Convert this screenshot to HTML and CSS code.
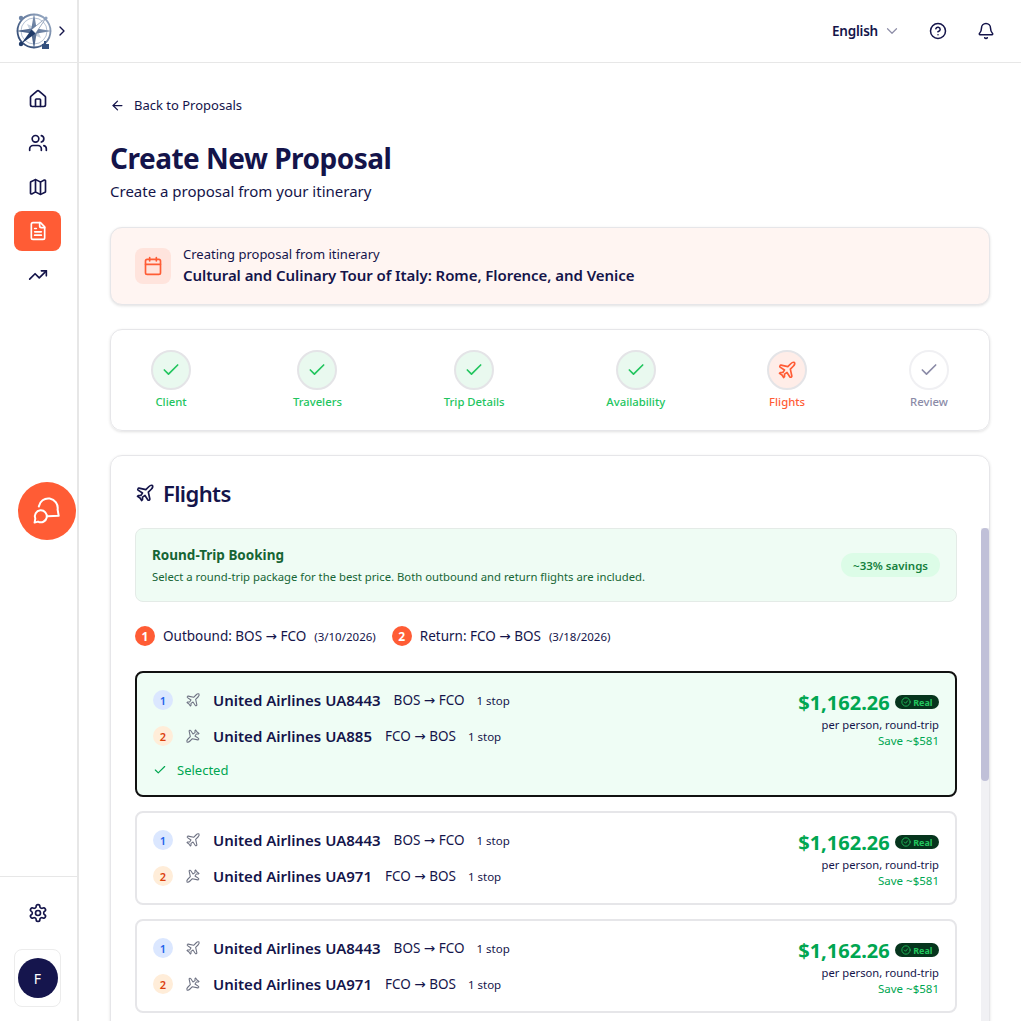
FILE: index.html
```html
<!DOCTYPE html>
<html lang="en">
<head>
    <meta charset="utf-8">
    <meta name="viewport" content="width=device-width, initial-scale=1">
    <title>Create New Proposal</title>
    <link rel="stylesheet" href="styles.css">
</head>
<body>
    <svg class="sprite" aria-hidden="true">
        <symbol id="i-home" viewBox="0 0 24 24"><path d="M15 21v-8a1 1 0 0 0-1-1h-4a1 1 0 0 0-1 1v8"/><path d="M3 10a2 2 0 0 1 .709-1.528l7-5.999a2 2 0 0 1 2.582 0l7 5.999A2 2 0 0 1 21 10v9a2 2 0 0 1-2 2H5a2 2 0 0 1-2-2z"/></symbol>
        <symbol id="i-users" viewBox="0 0 24 24"><path d="M16 21v-2a4 4 0 0 0-4-4H6a4 4 0 0 0-4 4v2"/><circle cx="9" cy="7" r="4"/><path d="M22 21v-2a4 4 0 0 0-3-3.87"/><path d="M16 3.13a4 4 0 0 1 0 7.75"/></symbol>
        <symbol id="i-map" viewBox="0 0 24 24"><path d="M14.106 5.553a2 2 0 0 0 1.788 0l3.659-1.83A1 1 0 0 1 21 4.619v12.764a1 1 0 0 1-.553.894l-4.553 2.277a2 2 0 0 1-1.788 0l-4.212-2.106a2 2 0 0 0-1.788 0l-3.659 1.83A1 1 0 0 1 3 19.381V6.618a1 1 0 0 1 .553-.894l4.553-2.277a2 2 0 0 1 1.788 0z"/><path d="M15 5.764v15"/><path d="M9 3.236v15"/></symbol>
        <symbol id="i-file" viewBox="0 0 24 24"><path d="M15 2H6a2 2 0 0 0-2 2v16a2 2 0 0 0 2 2h12a2 2 0 0 0 2-2V7Z"/><path d="M14 2v4a2 2 0 0 0 2 2h4"/><path d="M10 9H8"/><path d="M16 13H8"/><path d="M16 17H8"/></symbol>
        <symbol id="i-trend" viewBox="0 0 24 24"><polyline points="22 7 13.5 15.5 8.5 10.5 2 17"/><polyline points="16 7 22 7 22 13"/></symbol>
        <symbol id="i-gear" viewBox="0 0 24 24"><path d="M12.22 2h-.44a2 2 0 0 0-2 2v.18a2 2 0 0 1-1 1.73l-.43.25a2 2 0 0 1-2 0l-.15-.08a2 2 0 0 0-2.73.73l-.22.38a2 2 0 0 0 .73 2.73l.15.1a2 2 0 0 1 1 1.72v.51a2 2 0 0 1-1 1.74l-.15.09a2 2 0 0 0-.73 2.73l.22.38a2 2 0 0 0 2.73.73l.15-.08a2 2 0 0 1 2 0l.43.25a2 2 0 0 1 1 1.73V20a2 2 0 0 0 2 2h.44a2 2 0 0 0 2-2v-.18a2 2 0 0 1 1-1.73l.43-.25a2 2 0 0 1 2 0l.15.08a2 2 0 0 0 2.73-.73l.22-.39a2 2 0 0 0-.73-2.73l-.15-.08a2 2 0 0 1-1-1.74v-.5a2 2 0 0 1 1-1.74l.15-.09a2 2 0 0 0 .73-2.73l-.22-.38a2 2 0 0 0-2.73-.73l-.15.08a2 2 0 0 1-2 0l-.43-.25a2 2 0 0 1-1-1.73V4a2 2 0 0 0-2-2z"/><circle cx="12" cy="12" r="3"/></symbol>
        <symbol id="i-bell" viewBox="0 0 24 24"><path d="M10.268 21a2 2 0 0 0 3.464 0"/><path d="M3.262 15.326A1 1 0 0 0 4 17h16a1 1 0 0 0 .74-1.673C19.41 13.956 18 12.499 18 8A6 6 0 0 0 6 8c0 4.499-1.411 5.956-2.738 7.326"/></symbol>
        <symbol id="i-help" viewBox="0 0 24 24"><circle cx="12" cy="12" r="10"/><path d="M9.09 9a3 3 0 0 1 5.83 1c0 2-3 3-3 3"/><path d="M12 17h.01"/></symbol>
        <symbol id="i-calendar" viewBox="0 0 24 24"><path d="M8 2v4"/><path d="M16 2v4"/><rect x="3" y="4" width="18" height="18" rx="2"/><path d="M3 10h18"/></symbol>
        <symbol id="i-plane" viewBox="0 0 24 24"><path d="M17.8 19.2 16 11l3.5-3.5C21 6 21.5 4 21 3c-1-.5-3 0-4.5 1.5L13 8 4.8 6.2c-.5-.1-.9.1-1.1.5l-.3.5c-.2.5-.1 1 .3 1.3L9 12l-2 3H4l-1 1 3 2 2 3 1-1v-3l3-2 3.5 5.3c.3.4.8.5 1.3.3l.5-.2c.4-.3.6-.7.5-1.2z"/></symbol>
        <symbol id="i-check" viewBox="0 0 24 24"><path d="M20 6 9 17l-5-5"/></symbol>
        <symbol id="i-down" viewBox="0 0 24 24"><path d="m6 9 6 6 6-6"/></symbol>
        <symbol id="i-right" viewBox="0 0 24 24"><path d="m9 18 6-6-6-6"/></symbol>
        <symbol id="i-back" viewBox="0 0 24 24"><path d="m12 19-7-7 7-7"/><path d="M19 12H5"/></symbol>
        <symbol id="i-chat" viewBox="0 0 28 28"><path d="M5.8 9.5A9.5 9.5 0 0 1 24.6 12.5L25.7 18.8 14.6 19.3"/><path d="M1.6 25.6 2.3 21.6A6 6 0 1 1 5 24.6Z"/></symbol>
        <symbol id="i-circle-check" viewBox="0 0 24 24"><circle cx="12" cy="12" r="10"/><path d="m8 12 3 3 5-6"/></symbol>
    </svg>

    <aside class="sidebar">
        <div class="brand">
            <svg class="logo" viewBox="0 0 38 38">
                <defs>
                    <linearGradient id="logo-grad" x1="0" y1="1" x2="1" y2="0">
                        <stop offset="0" stop-color="#1f3a68"/>
                        <stop offset="1" stop-color="#a3b4cb"/>
                    </linearGradient>
                </defs>
                <circle cx="19" cy="19" r="16.5" fill="none" stroke="url(#logo-grad)" stroke-width="1.8"/>
                <circle cx="19" cy="19" r="13" fill="none" stroke="#b5c2d4" stroke-width="1"/>
                <path d="M12 12l7 3 7-3-3 7 3 7-7-3-7 3 3-7z" fill="#c9d3e0"/>
                <path d="M19 1l2.6 15.4L37 19l-15.4 2.6L19 37l-2.6-15.4L1 19l15.4-2.6z" fill="url(#logo-grad)"/>
                <path d="M6 32l10.6-14.6 4 4z" fill="#1f3a68"/>
                <path d="M31 6 16.6 17.4l4 4z" fill="#fff" stroke="#5b7296" stroke-width=".6"/>
                <circle cx="6" cy="32" r="2.2" fill="#1f3a68"/>
                <path d="M27 37v-5h2v-3h2v3h3v5z" fill="#33507e"/>
                <circle cx="6" cy="6" r="2.2" fill="#6d84a6"/>
                <circle cx="31" cy="6" r="1.6" fill="#8fa3c0"/>
            </svg>
            <svg class="icon brand-arrow"><use href="#i-right"/></svg>
        </div>
        <nav class="nav">
            <a class="nav-item"><svg class="icon"><use href="#i-home"/></svg></a>
            <a class="nav-item"><svg class="icon"><use href="#i-users"/></svg></a>
            <a class="nav-item"><svg class="icon"><use href="#i-map"/></svg></a>
            <a class="nav-item active"><svg class="icon"><use href="#i-file"/></svg></a>
            <a class="nav-item"><svg class="icon"><use href="#i-trend"/></svg></a>
        </nav>
        <div class="side-foot">
            <a class="nav-item"><svg class="icon"><use href="#i-gear"/></svg></a>
            <div class="avatar-box"><span class="avatar">F</span></div>
        </div>
    </aside>

    <button class="chat-btn"><svg class="icon"><use href="#i-chat"/></svg></button>

    <div class="page">
        <header class="topbar">
            <span class="lang">English</span>
            <svg class="icon lang-arrow"><use href="#i-down"/></svg>
            <svg class="icon top-icon"><use href="#i-help"/></svg>
            <svg class="icon top-icon"><use href="#i-bell"/></svg>
        </header>

        <main class="main">
            <a class="back"><svg class="icon"><use href="#i-back"/></svg>Back to Proposals</a>
            <h1>Create New Proposal</h1>
            <p class="subtitle">Create a proposal from your itinerary</p>

            <section class="banner">
                <div class="banner-icon"><svg class="icon"><use href="#i-calendar"/></svg></div>
                <div>
                    <div class="banner-small">Creating proposal from itinerary</div>
                    <div class="banner-title">Cultural and Culinary Tour of Italy: Rome, Florence, and Venice</div>
                </div>
            </section>

            <section class="stepper">
                <div class="step done"><div class="step-dot"><svg class="icon"><use href="#i-check"/></svg></div>Client</div>
                <div class="step done"><div class="step-dot"><svg class="icon"><use href="#i-check"/></svg></div>Travelers</div>
                <div class="step done"><div class="step-dot"><svg class="icon"><use href="#i-check"/></svg></div>Trip Details</div>
                <div class="step done"><div class="step-dot"><svg class="icon"><use href="#i-check"/></svg></div>Availability</div>
                <div class="step current"><div class="step-dot"><svg class="icon"><use href="#i-plane"/></svg></div>Flights</div>
                <div class="step todo"><div class="step-dot"><svg class="icon"><use href="#i-check"/></svg></div>Review</div>
            </section>

            <section class="flights">
                <h2><svg class="icon"><use href="#i-plane"/></svg>Flights</h2>
                <div class="flight-pane">
                    <div class="flight-list">
                        <div class="notice">
                            <div>
                                <div class="notice-title">Round-Trip Booking</div>
                                <div class="notice-text">Select a round-trip package for the best price. Both outbound and return flights are included.</div>
                            </div>
                            <span class="savings">~33% savings</span>
                        </div>

                        <div class="legs">
                            <span class="leg-num">1</span>
                            <span class="leg-name">Outbound: BOS <span class="arr">→</span> FCO</span>
                            <span class="leg-date">(3/10/2026)</span>
                            <span class="leg-num leg-second">2</span>
                            <span class="leg-name">Return: FCO <span class="arr">→</span> BOS</span>
                            <span class="leg-date">(3/18/2026)</span>
                        </div>

                        <article class="flight selected">
                            <div class="flight-info">
                                <div class="flight-row">
                                    <span class="num num-out">1</span>
                                    <svg class="icon plane"><use href="#i-plane"/></svg>
                                    <span class="airline">United Airlines UA8443</span>
                                    <span class="route">BOS <span class="arr">→</span> FCO</span>
                                    <span class="stops">1 stop</span>
                                </div>
                                <div class="flight-row">
                                    <span class="num num-ret">2</span>
                                    <svg class="icon plane plane-ret"><use href="#i-plane"/></svg>
                                    <span class="airline">United Airlines UA885</span>
                                    <span class="route">FCO <span class="arr">→</span> BOS</span>
                                    <span class="stops">1 stop</span>
                                </div>
                                <div class="selected-row"><svg class="icon"><use href="#i-check"/></svg>Selected</div>
                            </div>
                            <div class="price-box">
                                <div class="price-line"><span class="price">$1,162.26</span><span class="real"><svg class="icon"><use href="#i-circle-check"/></svg>Real</span></div>
                                <div class="per">per person, round-trip</div>
                                <div class="save">Save ~$581</div>
                            </div>
                        </article>

                        <article class="flight">
                            <div class="flight-info">
                                <div class="flight-row">
                                    <span class="num num-out">1</span>
                                    <svg class="icon plane"><use href="#i-plane"/></svg>
                                    <span class="airline">United Airlines UA8443</span>
                                    <span class="route">BOS <span class="arr">→</span> FCO</span>
                                    <span class="stops">1 stop</span>
                                </div>
                                <div class="flight-row">
                                    <span class="num num-ret">2</span>
                                    <svg class="icon plane plane-ret"><use href="#i-plane"/></svg>
                                    <span class="airline">United Airlines UA971</span>
                                    <span class="route">FCO <span class="arr">→</span> BOS</span>
                                    <span class="stops">1 stop</span>
                                </div>
                            </div>
                            <div class="price-box">
                                <div class="price-line"><span class="price">$1,162.26</span><span class="real"><svg class="icon"><use href="#i-circle-check"/></svg>Real</span></div>
                                <div class="per">per person, round-trip</div>
                                <div class="save">Save ~$581</div>
                            </div>
                        </article>

                        <article class="flight">
                            <div class="flight-info">
                                <div class="flight-row">
                                    <span class="num num-out">1</span>
                                    <svg class="icon plane"><use href="#i-plane"/></svg>
                                    <span class="airline">United Airlines UA8443</span>
                                    <span class="route">BOS <span class="arr">→</span> FCO</span>
                                    <span class="stops">1 stop</span>
                                </div>
                                <div class="flight-row">
                                    <span class="num num-ret">2</span>
                                    <svg class="icon plane plane-ret"><use href="#i-plane"/></svg>
                                    <span class="airline">United Airlines UA971</span>
                                    <span class="route">FCO <span class="arr">→</span> BOS</span>
                                    <span class="stops">1 stop</span>
                                </div>
                            </div>
                            <div class="price-box">
                                <div class="price-line"><span class="price">$1,162.26</span><span class="real"><svg class="icon"><use href="#i-circle-check"/></svg>Real</span></div>
                                <div class="per">per person, round-trip</div>
                                <div class="save">Save ~$581</div>
                            </div>
                        </article>
                    </div>
                    <div class="scroll-track"><div class="scroll-thumb"></div></div>
                </div>
            </section>
        </main>
    </div>
</body>
</html>
```

FILE: styles.css
```css
* {
    box-sizing: border-box;
}
html, body {
    margin: 0;
    height: 100%;
}
body {
    display: flex;
    height: 100vh;
    overflow: hidden;
    position: relative;
    background: #fff;
    color: #14144a;
    font-family: "Noto Sans", sans-serif;
}
.sprite {
    width: 0;
    height: 0;
    position: absolute;
}
.icon {
    width: 20px;
    height: 20px;
    fill: none;
    stroke: currentColor;
    stroke-width: 2;
    stroke-linecap: round;
    stroke-linejoin: round;
    flex-shrink: 0;
}
.arr {
    font-family: "DejaVu Sans", sans-serif;
}

/* sidebar */
.sidebar {
    width: 79px;
    flex-shrink: 0;
    display: flex;
    flex-direction: column;
    border-right: 2px solid #e7e7e7;
}
.brand {
    height: 63px;
    flex-shrink: 0;
    display: flex;
    align-items: center;
    padding-left: 15px;
    border-bottom: 1px solid #e7e7e7;
}
.logo {
    width: 38px;
    height: 38px;
}
.brand-arrow {
    width: 16px;
    height: 16px;
    margin-left: 1px;
}
.nav {
    flex: 1;
    display: flex;
    flex-direction: column;
    align-items: center;
    gap: 4px;
    padding-top: 16px;
    padding-right: 2px;
}
.nav-item {
    width: 47px;
    height: 40px;
    display: flex;
    align-items: center;
    justify-content: center;
    border-radius: 8px;
}
.nav-item.active {
    background: #ff5c35;
    color: #fff;
}
.side-foot {
    height: 145px;
    flex-shrink: 0;
    display: flex;
    flex-direction: column;
    align-items: center;
    padding-top: 16px;
    padding-right: 2px;
    border-top: 1px solid #e7e7e7;
}
.avatar-box {
    width: 47px;
    height: 58px;
    margin-top: 16px;
    display: flex;
    align-items: center;
    justify-content: center;
    border: 1px solid #ececec;
    border-radius: 8px;
}
.avatar {
    width: 40px;
    height: 40px;
    border-radius: 50%;
    display: flex;
    align-items: center;
    justify-content: center;
    background: #15154d;
    color: #fff;
    font-size: 14px;
}
.chat-btn {
    position: absolute;
    left: 18px;
    top: 482px;
    width: 58px;
    height: 58px;
    padding: 0;
    display: flex;
    align-items: center;
    justify-content: center;
    border: none;
    border-radius: 50%;
    background: #ff5c35;
    color: #fff;
}
.chat-btn .icon {
    width: 28px;
    height: 28px;
}

/* top bar */
.page {
    flex: 1;
    min-width: 0;
    display: flex;
    flex-direction: column;
}
.topbar {
    height: 63px;
    flex-shrink: 0;
    display: flex;
    align-items: center;
    justify-content: flex-end;
    padding-right: 26px;
    border-bottom: 1px solid #e7e7e7;
}
.lang {
    font-size: 13.5px;
    font-weight: 600;
    letter-spacing: -0.2px;
}
.lang-arrow {
    width: 18px;
    height: 18px;
    margin: 0 -2px 0 5px;
    color: #8e8ea8;
    stroke-width: 1.6;
}
.top-icon {
    width: 18px;
    height: 18px;
    margin-left: 30px;
}

/* main column */
.main {
    flex: 1;
    min-height: 0;
    overflow: hidden;
    padding: 32px 31px 0;
}
.back {
    display: flex;
    align-items: center;
    gap: 9px;
    height: 20px;
    font-size: 13px;
}
.back .icon {
    width: 15px;
    height: 15px;
}
h1 {
    margin: 25px 0 0;
    font-size: 28px;
    line-height: 36px;
    font-weight: 700;
    letter-spacing: -0.5px;
}
.subtitle {
    margin: 4px 0 0;
    font-size: 15px;
    line-height: 22px;
}
.banner {
    margin-top: 25px;
    height: 78px;
    display: flex;
    align-items: center;
    gap: 12px;
    padding: 0 24px;
    background: #fff5f2;
    border: 1px solid #e6e6e9;
    border-radius: 12px;
    box-shadow: 0 1px 3px rgba(0, 0, 0, 0.12);
}
.banner-icon {
    width: 36px;
    height: 36px;
    display: flex;
    align-items: center;
    justify-content: center;
    border-radius: 8px;
    background: #ffe4dd;
    color: #ff5c35;
}
.banner-small {
    font-size: 13px;
    line-height: 18px;
}
.banner-title {
    font-size: 15px;
    line-height: 24px;
    font-weight: 600;
    letter-spacing: -0.06px;
}

/* steps */
.stepper {
    margin-top: 24px;
    height: 102px;
    display: flex;
    justify-content: space-between;
    padding: 20px 40px 0;
    border: 1px solid #e6e6e9;
    border-radius: 12px;
    box-shadow: 0 1px 3px rgba(0, 0, 0, 0.12);
}
.step {
    display: flex;
    flex-direction: column;
    align-items: center;
    gap: 2px;
    font-size: 11.3px;
    line-height: 20px;
    font-weight: 500;
}
.step-dot {
    width: 40px;
    height: 40px;
    display: flex;
    align-items: center;
    justify-content: center;
    border: 2px solid #e4e4e7;
    border-radius: 50%;
}
.step.done {
    color: #22c55e;
}
.step.done .step-dot {
    background: #e9f9ef;
}
.step.current {
    color: #ff5c35;
}
.step.current .step-dot {
    background: #ffede8;
}
.step.todo {
    color: #8b8ba7;
}
.step.todo .step-dot {
    border-color: #f0f0f3;
}

/* flights card */
.flights {
    margin-top: 24px;
    height: 640px;
    padding-left: 24px;
    border: 1px solid #e6e6e9;
    border-radius: 12px;
    box-shadow: 0 1px 3px rgba(0, 0, 0, 0.12);
}
.flights h2 {
    margin: 0;
    height: 72px;
    padding-top: 2px;
    display: flex;
    align-items: center;
    gap: 8px;
    font-size: 22px;
    font-weight: 600;
    letter-spacing: -0.6px;
}
.flight-pane {
    height: 500px;
    display: flex;
    gap: 24px;
}
.flight-list {
    flex: 1;
    min-width: 0;
    overflow: hidden;
}
.scroll-track {
    width: 8px;
    flex-shrink: 0;
    background: #f1f1f4;
}
.scroll-thumb {
    height: 253px;
    background: #c0c0d8;
    border-radius: 4px;
}
.notice {
    height: 74px;
    display: flex;
    align-items: center;
    justify-content: space-between;
    padding: 0 16px;
    background: #effcf4;
    border: 1px solid #e4ebe7;
    border-radius: 8px;
    color: #166534;
}
.notice-title {
    margin-top: -1px;
    font-size: 13.5px;
    line-height: 20px;
    font-weight: 700;
}
.notice-text {
    margin-top: 4px;
    font-size: 11.3px;
    line-height: 16px;
}
.savings {
    height: 24px;
    padding: 0 12px;
    display: flex;
    align-items: center;
    border-radius: 12px;
    background: #dcfce7;
    color: #15803d;
    font-size: 11.5px;
    font-weight: 600;
}
.legs {
    height: 20px;
    margin: 24px 0 25px;
    display: flex;
    align-items: center;
}
.leg-num {
    width: 20px;
    height: 20px;
    display: flex;
    align-items: center;
    justify-content: center;
    border-radius: 50%;
    background: #ff5c35;
    color: #fff;
    font-size: 12px;
    font-weight: 700;
}
.leg-second {
    margin-left: 16px;
}
.leg-name {
    margin-left: 8px;
    font-size: 13.5px;
}
.leg-date {
    margin-left: 8px;
    font-size: 11.5px;
}
.flight {
    display: flex;
    justify-content: space-between;
    height: 94px;
    margin-bottom: 14px;
    padding: 9px 16px;
    border: 2px solid #e6e6e9;
    border-radius: 8px;
}
.flight.selected {
    height: 126px;
    background: #effdf5;
    border-color: #111;
}
.flight-row {
    height: 36px;
    display: flex;
    align-items: center;
}
.num {
    width: 20px;
    height: 20px;
    display: flex;
    align-items: center;
    justify-content: center;
    border-radius: 50%;
    font-size: 11px;
    font-weight: 600;
}
.num-out {
    background: #dbe7ff;
    color: #2563eb;
}
.num-ret {
    background: #ffedd9;
    color: #dc3f0d;
}
.plane {
    width: 16px;
    height: 16px;
    margin-left: 12px;
    color: #6e7283;
    stroke-width: 1.6;
}
.plane-ret {
    transform: rotate(180deg);
}
.airline {
    margin-left: 12px;
    font-size: 15px;
    font-weight: 600;
}
.route {
    margin-left: 13px;
    font-size: 13.5px;
}
.stops {
    margin-left: 12px;
    font-size: 11.5px;
}
.selected-row {
    height: 32px;
    display: flex;
    align-items: center;
    gap: 10px;
    color: #00a651;
    font-size: 13px;
}
.selected-row .icon {
    width: 14px;
    height: 14px;
}
.price-box {
    text-align: right;
}
.price-line {
    display: flex;
    align-items: center;
    justify-content: flex-end;
    gap: 5px;
    height: 36px;
    margin-top: 2px;
}
.price {
    color: #00a651;
    font-size: 20px;
    font-weight: 700;
}
.real {
    height: 14px;
    padding: 0 6.5px;
    display: flex;
    align-items: center;
    gap: 2px;
    border-radius: 7px;
    background: #06351d;
    color: #22c55e;
    font-size: 9px;
    font-weight: 700;
}
.real .icon {
    width: 10px;
    height: 10px;
}
.per {
    margin-top: -3px;
    font-size: 11.2px;
    line-height: 16px;
}
.save {
    color: #00a651;
    font-size: 11.5px;
    line-height: 16px;
}
```
